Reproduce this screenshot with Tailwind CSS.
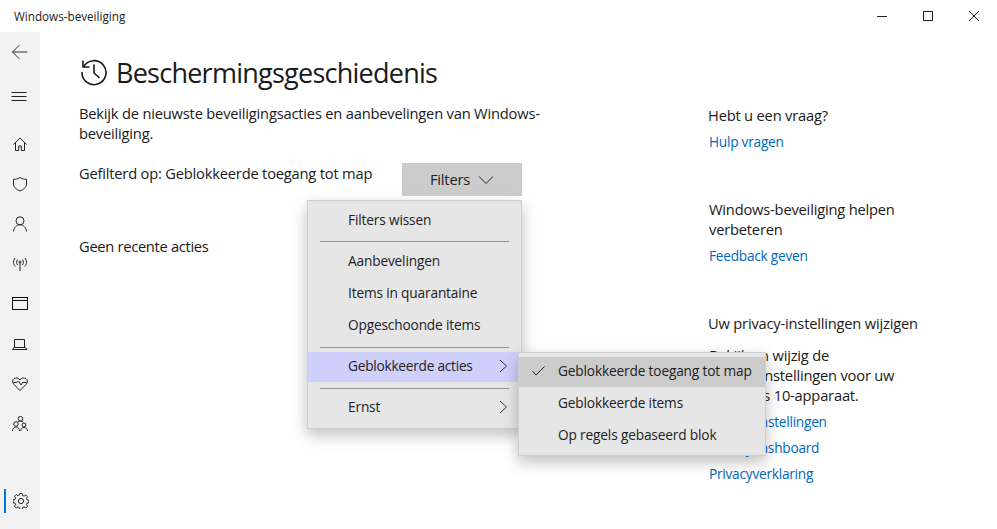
<!DOCTYPE html>
<html lang="nl">
<head>
    <meta charset="UTF-8">
    <title>Windows-beveiliging</title>
    <script src="https://cdn.jsdelivr.net/npm/@tailwindcss/browser@4"></script>
</head>
<body class="bg-white text-[#1a1a1a] font-['Open_Sans','Noto_Sans',sans-serif] text-[14.7px] tracking-[-0.2px] overflow-hidden">
<div class="relative w-[997px] h-[529px] overflow-hidden bg-white">

    <!-- titelbalk -->
    <div class="flex h-[32px] items-center justify-between">
        <span class="pl-[14px] pt-[2px] text-[11.7px] tracking-normal text-[#222]">Windows-beveiliging</span>
        <div class="flex items-center text-black">
            <div class="flex w-[46px] justify-center">
                <svg width="12" height="12" viewBox="0 0 12 12"><path d="M1 6.500h10" stroke="#222" fill="none"/></svg>
            </div>
            <div class="flex w-[46px] justify-center">
                <svg width="12" height="12" viewBox="0 0 12 12"><rect x="1.500" y="1.500" width="9" height="9" stroke="#222" fill="none"/></svg>
            </div>
            <div class="flex w-[46px] justify-center">
                <svg width="12" height="12" viewBox="0 0 12 12"><path d="M1 1l10 10M11 1L1 11" stroke="#222" fill="none"/></svg>
            </div>
        </div>
    </div>

    <div class="flex h-[497px]">
        <!-- zijbalk -->
        <div class="relative flex w-[40px] flex-col items-center bg-[#f2f2f2]">
            <div class="mt-[12px] ml-[-1px] h-[16px]">
                <svg width="16" height="16" viewBox="0 0 16 16" fill="none" stroke="#333"><path d="M0.500 8h15M7.500 1L0.500 8l7 7"/></svg>
            </div>
            <div class="mt-[29px] ml-[-2px] h-[16px]">
                <svg width="16" height="16" viewBox="0 0 16 16" fill="none" stroke="#222"><path d="M0.500 3.500h15M0.500 7.500h15M0.500 11.500h15"/></svg>
            </div>
            <div class="mt-[31px] flex flex-col gap-[24px]">
                <svg width="16" height="16" viewBox="0 0 16 16" fill="none" stroke="#222"><path d="M1.500 8.500L8 2l6.500 6.500M3.500 7v7.500h3.200V10h2.600v4.500h3.200V7"/></svg>
                <svg width="16" height="16" viewBox="0 0 16 16" fill="none" stroke="#222"><path d="M8 1.500c2 1.300 4.300 1.900 6.500 1.900V8c0 3.300-2.800 5.500-6.500 7C4.300 13.500 1.500 11.300 1.500 8V3.400C3.700 3.400 6 2.800 8 1.500z"/></svg>
                <svg width="16" height="16" viewBox="0 0 16 16" fill="none" stroke="#222"><circle cx="8" cy="4.800" r="4"/><path d="M1.500 15.500c.3-3.700 3-6.700 6.500-6.700s6.200 3 6.500 6.700"/></svg>
                <svg width="16" height="16" viewBox="0 0 16 16" fill="none" stroke="#222"><circle cx="8" cy="6" r="1"/><path d="M8 7v8M5.600 3.500c-1.300 1.600-1.300 3.900 0 5.500M10.400 3.500c1.300 1.600 1.300 3.900 0 5.500M3.200 2c-2.300 2.400-2.300 6.100 0 8.500M12.800 2c2.300 2.400 2.300 6.100 0 8.500"/></svg>
                <svg width="16" height="16" viewBox="0 0 16 16" fill="none" stroke="#111"><rect x="0.500" y="1.500" width="15" height="12"/><path d="M0.500 4.500h15"/></svg>
                <svg width="16" height="16" viewBox="0 0 16 16" fill="none" stroke="#222"><path d="M2.500 11.500v-8h10v8M0.500 13.500h14.500l-1.500-2H2z"/></svg>
                <svg width="16" height="16" viewBox="0 0 16 16" fill="none" stroke="#222"><path d="M8 14.500L1.800 8.300C0 6.500.3 3.800 2 2.600c1.800-1.200 4.500-.8 6 1.400 1.500-2.200 4.200-2.600 6-1.400 1.700 1.200 2 3.900.2 5.700z"/><path d="M1.500 6.500h3.500l1.500-1.500 2.500 4 1.500-2.500h4"/></svg>
                <svg width="16" height="16" viewBox="0 0 16 16" fill="none" stroke="#222"><circle cx="8.500" cy="2.800" r="2.300"/><circle cx="4" cy="8" r="2.300"/><circle cx="12" cy="9" r="2"/><path d="M0.500 15c0-2.300 1.500-4 3.500-4s3.500 1.700 3.500 4M8.800 15c0-2.200 1.300-3.500 3.200-3.500s3.500 1.300 3.500 3.500M5.500 6.300c.5-.6 1.800-1.200 3-1.200s2.200.5 2.800 1.300"/></svg>
            </div>
            <div class="absolute bottom-[16px] left-0 flex h-[24px] w-full items-center">
                <div class="ml-[4px] h-[24px] w-[2px] bg-[#0078d7]"></div>
                <svg class="ml-[7px]" width="16" height="16" viewBox="0 0 16 16" fill="none" stroke="#222"><circle cx="8" cy="8" r="2.600"/><path d="M6.800 0.500h2.400l.4 2 1.500.6 1.700-1.100 1.700 1.700-1.100 1.700.6 1.500 2 .4v2.400l-2 .4-.6 1.500 1.100 1.700-1.700 1.700-1.700-1.100-1.500.6-.4 2H6.800l-.4-2-1.500-.6-1.700 1.100-1.700-1.700 1.100-1.700-.6-1.500-2-.4V6.800l2-.4.600-1.500L1.500 3.200l1.700-1.700 1.700 1.100 1.500-.6z"/></svg>
            </div>
        </div>

        <!-- hoofdinhoud -->
        <div class="w-[628px] pl-[39px] pt-[22px]">
            <div class="flex items-center gap-[9px]">
                <svg width="28" height="28" viewBox="-1 1 28 28" fill="none" stroke="#1a1a1a" stroke-width="1.600"><path d="M3 2.500v6.500h6.500"/><path d="M3.500 8.800A12 12 0 1 1 2 14"/><path d="M14 6.500V15l5.500 5"/></svg>
                <h1 class="text-[27px] leading-[38px] tracking-[-0.75px] font-normal">Beschermingsgeschiedenis</h1>
            </div>
            <p class="mt-[11px] w-[490px] leading-[20px]">Bekijk de nieuwste beveiligingsacties en aanbevelingen van Windows-beveiliging.</p>
            <div class="mt-[20px] flex items-start">
                <p class="w-[323px] leading-[20px]">Gefilterd op: Geblokkeerde toegang tot map</p>
                <button class="flex h-[33px] w-[120px] items-center justify-center gap-[8px] bg-[#cccccc] text-[#222]">
                    Filters
                    <svg width="16" height="10" viewBox="0 0 16 10" fill="none" stroke="#222"><path d="M1 1.500l7 7 7-7"/></svg>
                </button>
            </div>
            <p class="mt-[40px] leading-[20px] tracking-[-0.3px]">Geen recente acties</p>
        </div>

        <!-- rechterkolom -->
        <div class="flex-1 pt-[73px] pl-[40px] leading-[20px]">
            <p>Hebt u een vraag?</p>
            <p class="mt-[7px] ml-[1px] text-[13.7px] tracking-[-0.25px] text-[#0067c0]">Hulp vragen</p>
            <p class="mt-[47px] ml-[1px] w-[220px]">Windows-beveiliging helpen verbeteren</p>
            <p class="mt-[7px] ml-[1px] text-[13.7px] tracking-[-0.25px] text-[#0067c0]">Feedback geven</p>
            <p class="mt-[47px]">Uw privacy-instellingen wijzigen</p>
            <p class="mt-[12px] ml-[1px] w-[200px]">Bekijk en wijzig de<br>privacy-instellingen voor uw<br>Windows 10-apparaat.</p>
            <div class="mt-[7px] ml-[1px] flex flex-col gap-[6px] text-[13.7px] tracking-[-0.25px] text-[#0067c0]">
                <p>Privacy-instellingen</p>
                <p>Privacydashboard</p>
                <p>Privacyverklaring</p>
            </div>
        </div>
    </div>

    <!-- filtermenu -->
    <div class="absolute left-[307px] top-[200px] w-[215px] border border-[#cfcfcf] bg-[#e6e6e6] pt-[3px] pb-[4px] text-[13.7px] tracking-[-0.16px] text-[#222] shadow-[0_6px_14px_rgba(0,0,0,0.25)]">
        <div class="flex h-[32px] items-center pl-[40px]">Filters wissen</div>
        <div class="mx-[12px] mt-[5px] mb-[3px] h-px bg-[#8f8f8f]"></div>
        <div class="flex h-[32px] items-center pl-[40px]">Aanbevelingen</div>
        <div class="flex h-[32px] items-center pl-[40px]">Items in quarantaine</div>
        <div class="flex h-[32px] items-center pl-[40px]">Opgeschoonde items</div>
        <div class="mx-[12px] mt-[6px] mb-[4px] h-px bg-[#8f8f8f]"></div>
        <div class="flex h-[30px] items-center justify-between bg-[#cfcffb] pb-[2px] pl-[40px] pr-[13px] tracking-[-0.25px]">
            Geblokkeerde acties
            <svg width="9" height="14" viewBox="0 0 9 14" fill="none" stroke="#333"><path d="M1 1l6.500 6-6.500 6"/></svg>
        </div>
        <div class="mx-[12px] mt-[6px] mb-[3px] h-px bg-[#8f8f8f]"></div>
        <div class="flex h-[32px] items-center justify-between pb-[2px] pl-[40px] pr-[13px]">
            Ernst
            <svg width="9" height="14" viewBox="0 0 9 14" fill="none" stroke="#333"><path d="M1 1l6.500 6-6.500 6"/></svg>
        </div>
    </div>

    <!-- submenu -->
    <div class="absolute left-[518px] top-[352px] w-[248px] border border-[#cfcfcf] bg-[#e6e6e6] py-[4px] text-[13.7px] tracking-[-0.16px] text-[#222] shadow-[0_6px_14px_rgba(0,0,0,0.25)]">
        <div class="relative flex h-[30px] items-center bg-[#cccccc] pb-[2px] pl-[39px]">
            <svg class="absolute left-[13px] top-[9px]" width="13" height="10" viewBox="0 0 13 10" fill="none" stroke="#222"><path d="M0.500 5l3.500 4L12.500 0.500"/></svg>
            Geblokkeerde toegang tot map
        </div>
        <div class="flex h-[32px] items-center pl-[39px]">Geblokkeerde items</div>
        <div class="flex h-[32px] items-center pl-[39px]">Op regels gebaseerd blok</div>
    </div>
</div>
</body>
</html>
